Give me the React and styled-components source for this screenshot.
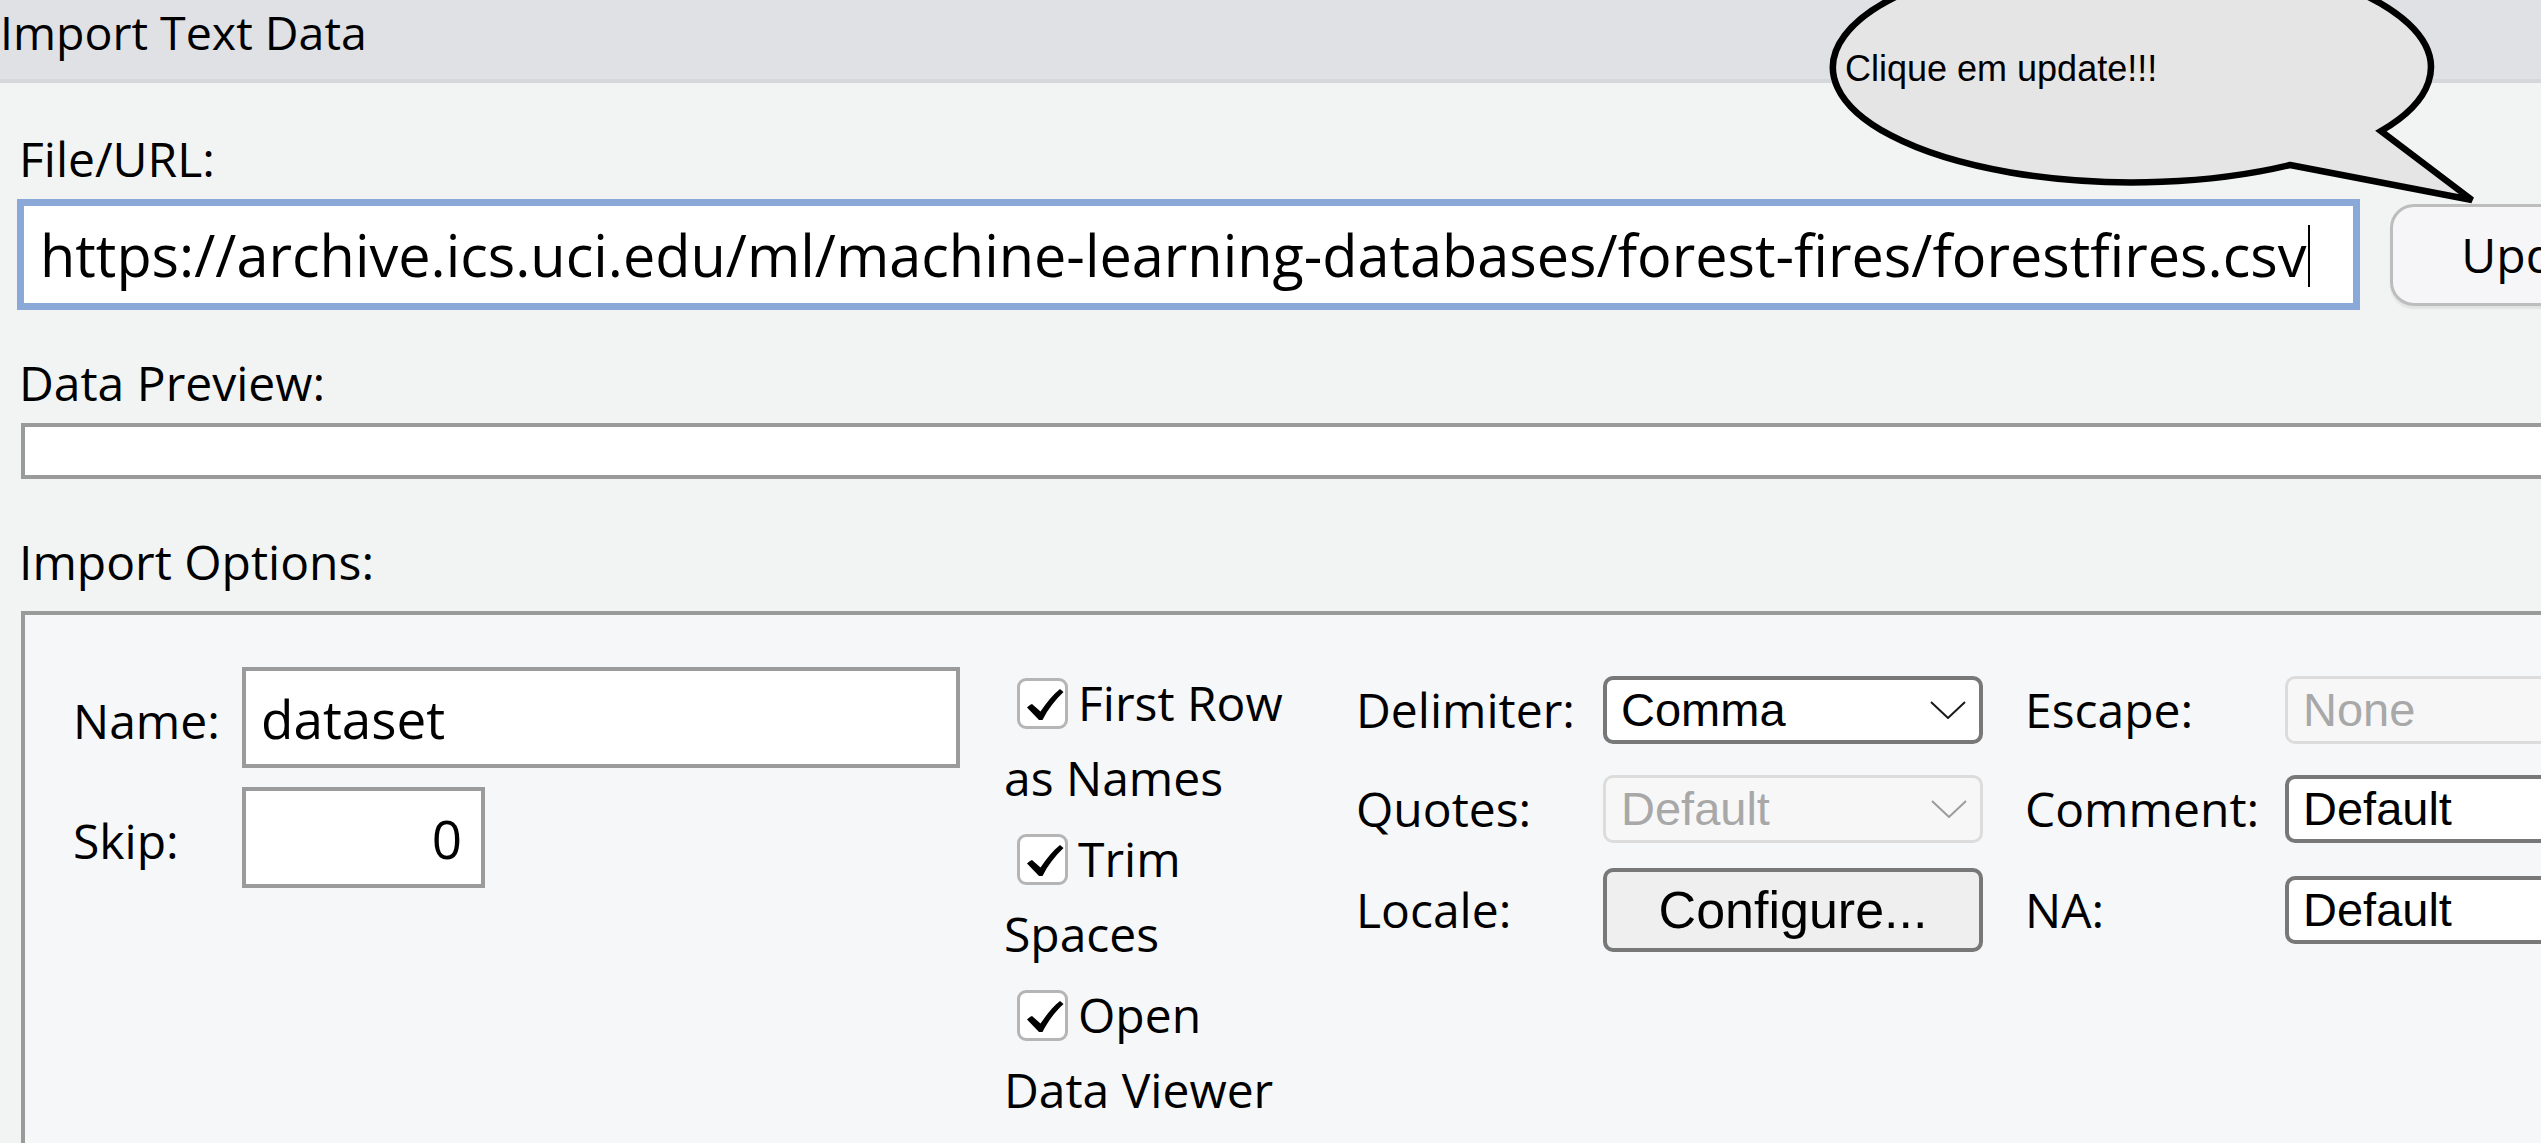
import React from "react";
import styled, { createGlobalStyle } from "styled-components";

const GlobalStyle = createGlobalStyle`
  html, body {
    margin: 0;
    padding: 0;
    background: #f2f4f3;
  }
  body {
    font-family: "Open Sans", "DejaVu Sans", sans-serif;
    color: #000;
  }
  * {
    box-sizing: border-box;
  }
`;

const Page = styled.div`
  position: relative;
  width: 2541px;
  height: 1143px;
  overflow: hidden;
  background: #f2f4f3;
`;

const TitleBar = styled.header`
  height: 83px;
  background: #e0e1e5;
  border-bottom: 4px solid #d6d7db;
  font-size: 46.5px;
  line-height: 64px;
  white-space: nowrap;
`;

const Content = styled.main`
  padding-left: 17px;
`;

const SectionLabel = styled.div`
  font-size: 48px;
  line-height: 56px;
  margin: ${p => p.$mt}px 0 ${p => p.$mb}px 2px;
  white-space: nowrap;
`;

const UrlRow = styled.div`
  display: flex;
  align-items: center;
  gap: 30px;
`;

const UrlField = styled.div`
  flex: 0 0 2343px;
  height: 111px;
  border: 7px solid #8aa9d8;
  background: #fff;
  padding: 14px 0 13px 16px;
  font-size: 57.6px;
  line-height: 70px;
  white-space: nowrap;
  overflow: hidden;
`;

const Caret = styled.span`
  display: inline-block;
  width: 2px;
  height: 62px;
  margin-left: 1px;
  vertical-align: -10px;
  background: #000;
`;

const UpdateButton = styled.button`
  flex: 0 0 307px;
  height: 102px;
  padding: 0;
  border: 3px solid #bdbdbd;
  border-radius: 24px;
  background: #f6f6f8;
  box-shadow: 0 3px 2px rgba(0, 0, 0, 0.07);
  font-family: inherit;
  font-size: 48px;
  line-height: 96px;
  color: #000;
  text-align: center;
`;

const PreviewBox = styled.div`
  height: 56px;
  margin: 0 -40px 0 4px;
  border: 4px solid #9a9a9a;
  background: #fff;
`;

const OptionsBox = styled.section`
  display: flex;
  align-items: flex-start;
  height: 600px;
  margin: 0 -40px 0 4px;
  padding: 52px 0 0 48px;
  border: 4px solid #9a9a9a;
  background: #f6f7f9;
`;

const FieldGrid = styled.div`
  flex-shrink: 0;
  display: grid;
  grid-template-columns: 169px auto;
  row-gap: 19px;
  align-items: baseline;
`;

const FieldLabel = styled.span`
  font-size: 48px;
  line-height: 56px;
  white-space: nowrap;
`;

const TextField = styled.div`
  width: ${p => p.$w}px;
  height: 101px;
  border: 4px solid #9b9b9b;
  background: #fff;
  padding: ${p => (p.$right ? "13px 19px 10px 0" : "13px 0 10px 15px")};
  font-size: 53px;
  line-height: 70px;
  text-align: ${p => (p.$right ? "right" : "left")};
  white-space: nowrap;
`;

const CheckList = styled.div`
  flex: 0 0 300px;
  margin: -2px 0 0 44px;
  display: flex;
  flex-direction: column;
  gap: 6px;
`;

const CheckItem = styled.label`
  display: block;
  font-size: 48px;
  line-height: 75px;
`;

const CheckBox = styled.span`
  display: inline-block;
  width: 51px;
  height: 51px;
  margin: 0 10px 0 13px;
  vertical-align: -8px;
  border: 3px solid #b5b5b5;
  border-radius: 9px;
  background: #fff;

  svg {
    display: block;
  }
`;

const OptionGrid = styled.div`
  flex-shrink: 0;
  margin: 9px 0 0 52px;
  display: flex;
  flex-direction: column;
`;

const OptionRow = styled.div`
  display: flex;
  align-items: center;
  height: ${p => p.$h || 68}px;
  margin-top: ${p => p.$mt || 0}px;
`;

const OptionLabel = styled.span`
  flex: 0 0 ${p => p.$w}px;
  margin-left: ${p => p.$ml || 0}px;
  font-size: 48px;
  line-height: 56px;
  white-space: nowrap;
`;

const SelectBox = styled.div`
  flex: 0 0 380px;
  height: 68px;
  display: flex;
  align-items: center;
  justify-content: space-between;
  padding: 0 13px 0 ${p => (p.$disabled ? 15 : 14)}px;
  border: ${p => (p.$disabled ? "3px solid #dcdcdc" : "4px solid #787878")};
  border-radius: 10px;
  background: ${p => (p.$disabled ? "#f7f7f8" : "#fff")};
  color: ${p => (p.$disabled ? "#a8a8a8" : "#000")};
  font-family: "Liberation Sans", Arial, sans-serif;
  font-size: 47px;
  line-height: 60px;
  white-space: nowrap;

  svg {
    flex-shrink: 0;
  }
`;

const ConfigureButton = styled.button`
  flex: 0 0 380px;
  height: 84px;
  padding: 0;
  border: 4px solid #787878;
  border-radius: 10px;
  background: #efefef;
  font-family: "Liberation Sans", Arial, sans-serif;
  font-size: 52px;
  line-height: 76px;
  color: #000;
`;

const Bubble = styled.div`
  position: absolute;
  left: 1826px;
  top: 0;
  width: 660px;
  height: 210px;
  pointer-events: none;

  svg {
    position: absolute;
    left: 0;
    top: 0;
  }
`;

const BubbleText = styled.span`
  position: absolute;
  left: 19px;
  top: 49px;
  font-family: "Liberation Sans", Arial, sans-serif;
  font-size: 36px;
  line-height: 40px;
  white-space: nowrap;
`;

function Chevron({ disabled }) {
  return (
    <svg width="36" height="18" viewBox="0 0 36 18">
      <polyline
        points="1,1 18,17 35,1"
        fill="none"
        stroke={disabled ? "#9c9c9c" : "#1a1a1a"}
        strokeWidth="2"
      />
    </svg>
  );
}

function Select({ value, disabled }) {
  return (
    <SelectBox $disabled={disabled}>
      <span>{value}</span>
      <Chevron disabled={disabled} />
    </SelectBox>
  );
}

function Check({ children }) {
  return (
    <CheckItem>
      <CheckBox>
        <svg width="45" height="45" viewBox="3 3 45 45">
          <path
            d="M10 29.5 C12 27.5 13.5 26.5 15 26 L23.5 33.5 C30 24 36 16.5 43 11 L46.5 14 C38 22 31 31 25.5 42 L22 42 Z"
            fill="#000"
          />
        </svg>
      </CheckBox>
      {children}
    </CheckItem>
  );
}

export default function App() {
  return (
    <Page>
      <GlobalStyle />
      <TitleBar>Import Text Data</TitleBar>
      <Content>
        <SectionLabel $mt={48} $mb={12}>File/URL:</SectionLabel>
        <UrlRow>
          <UrlField>
            https://archive.ics.uci.edu/ml/machine-learning-databases/forest-fires/forestfires.csv
            <Caret />
          </UrlField>
          <UpdateButton>Update</UpdateButton>
        </UrlRow>

        <SectionLabel $mt={45} $mb={12}>Data Preview:</SectionLabel>
        <PreviewBox />

        <SectionLabel $mt={55} $mb={21}>Import Options:</SectionLabel>
        <OptionsBox>
          <FieldGrid>
            <FieldLabel>Name:</FieldLabel>
            <TextField $w={718}>dataset</TextField>
            <FieldLabel>Skip:</FieldLabel>
            <TextField $w={243} $right>0</TextField>
          </FieldGrid>

          <CheckList>
            <Check>First Row as Names</Check>
            <Check>Trim Spaces</Check>
            <Check>Open Data Viewer</Check>
          </CheckList>

          <OptionGrid>
            <OptionRow>
              <OptionLabel $w={247}>Delimiter:</OptionLabel>
              <Select value="Comma" />
              <OptionLabel $w={260} $ml={42}>Escape:</OptionLabel>
              <Select value="None" disabled />
            </OptionRow>
            <OptionRow $mt={31}>
              <OptionLabel $w={247}>Quotes:</OptionLabel>
              <Select value="Default" disabled />
              <OptionLabel $w={260} $ml={42}>Comment:</OptionLabel>
              <Select value="Default" />
            </OptionRow>
            <OptionRow $mt={25} $h={84}>
              <OptionLabel $w={247}>Locale:</OptionLabel>
              <ConfigureButton>Configure...</ConfigureButton>
              <OptionLabel $w={260} $ml={42}>NA:</OptionLabel>
              <Select value="Default" />
            </OptionRow>
          </OptionGrid>
        </OptionsBox>
      </Content>

      <Bubble>
        <svg width="660" height="210" viewBox="0 0 660 210">
          <path
            d="M464 165 L646 200 L555 131 A299 115 0 1 0 464 165 Z"
            fill="#e5e5e5"
            stroke="#000"
            strokeWidth="6.5"
            strokeLinejoin="miter"
          />
        </svg>
        <BubbleText>Clique em update!!!</BubbleText>
      </Bubble>
    </Page>
  );
}
